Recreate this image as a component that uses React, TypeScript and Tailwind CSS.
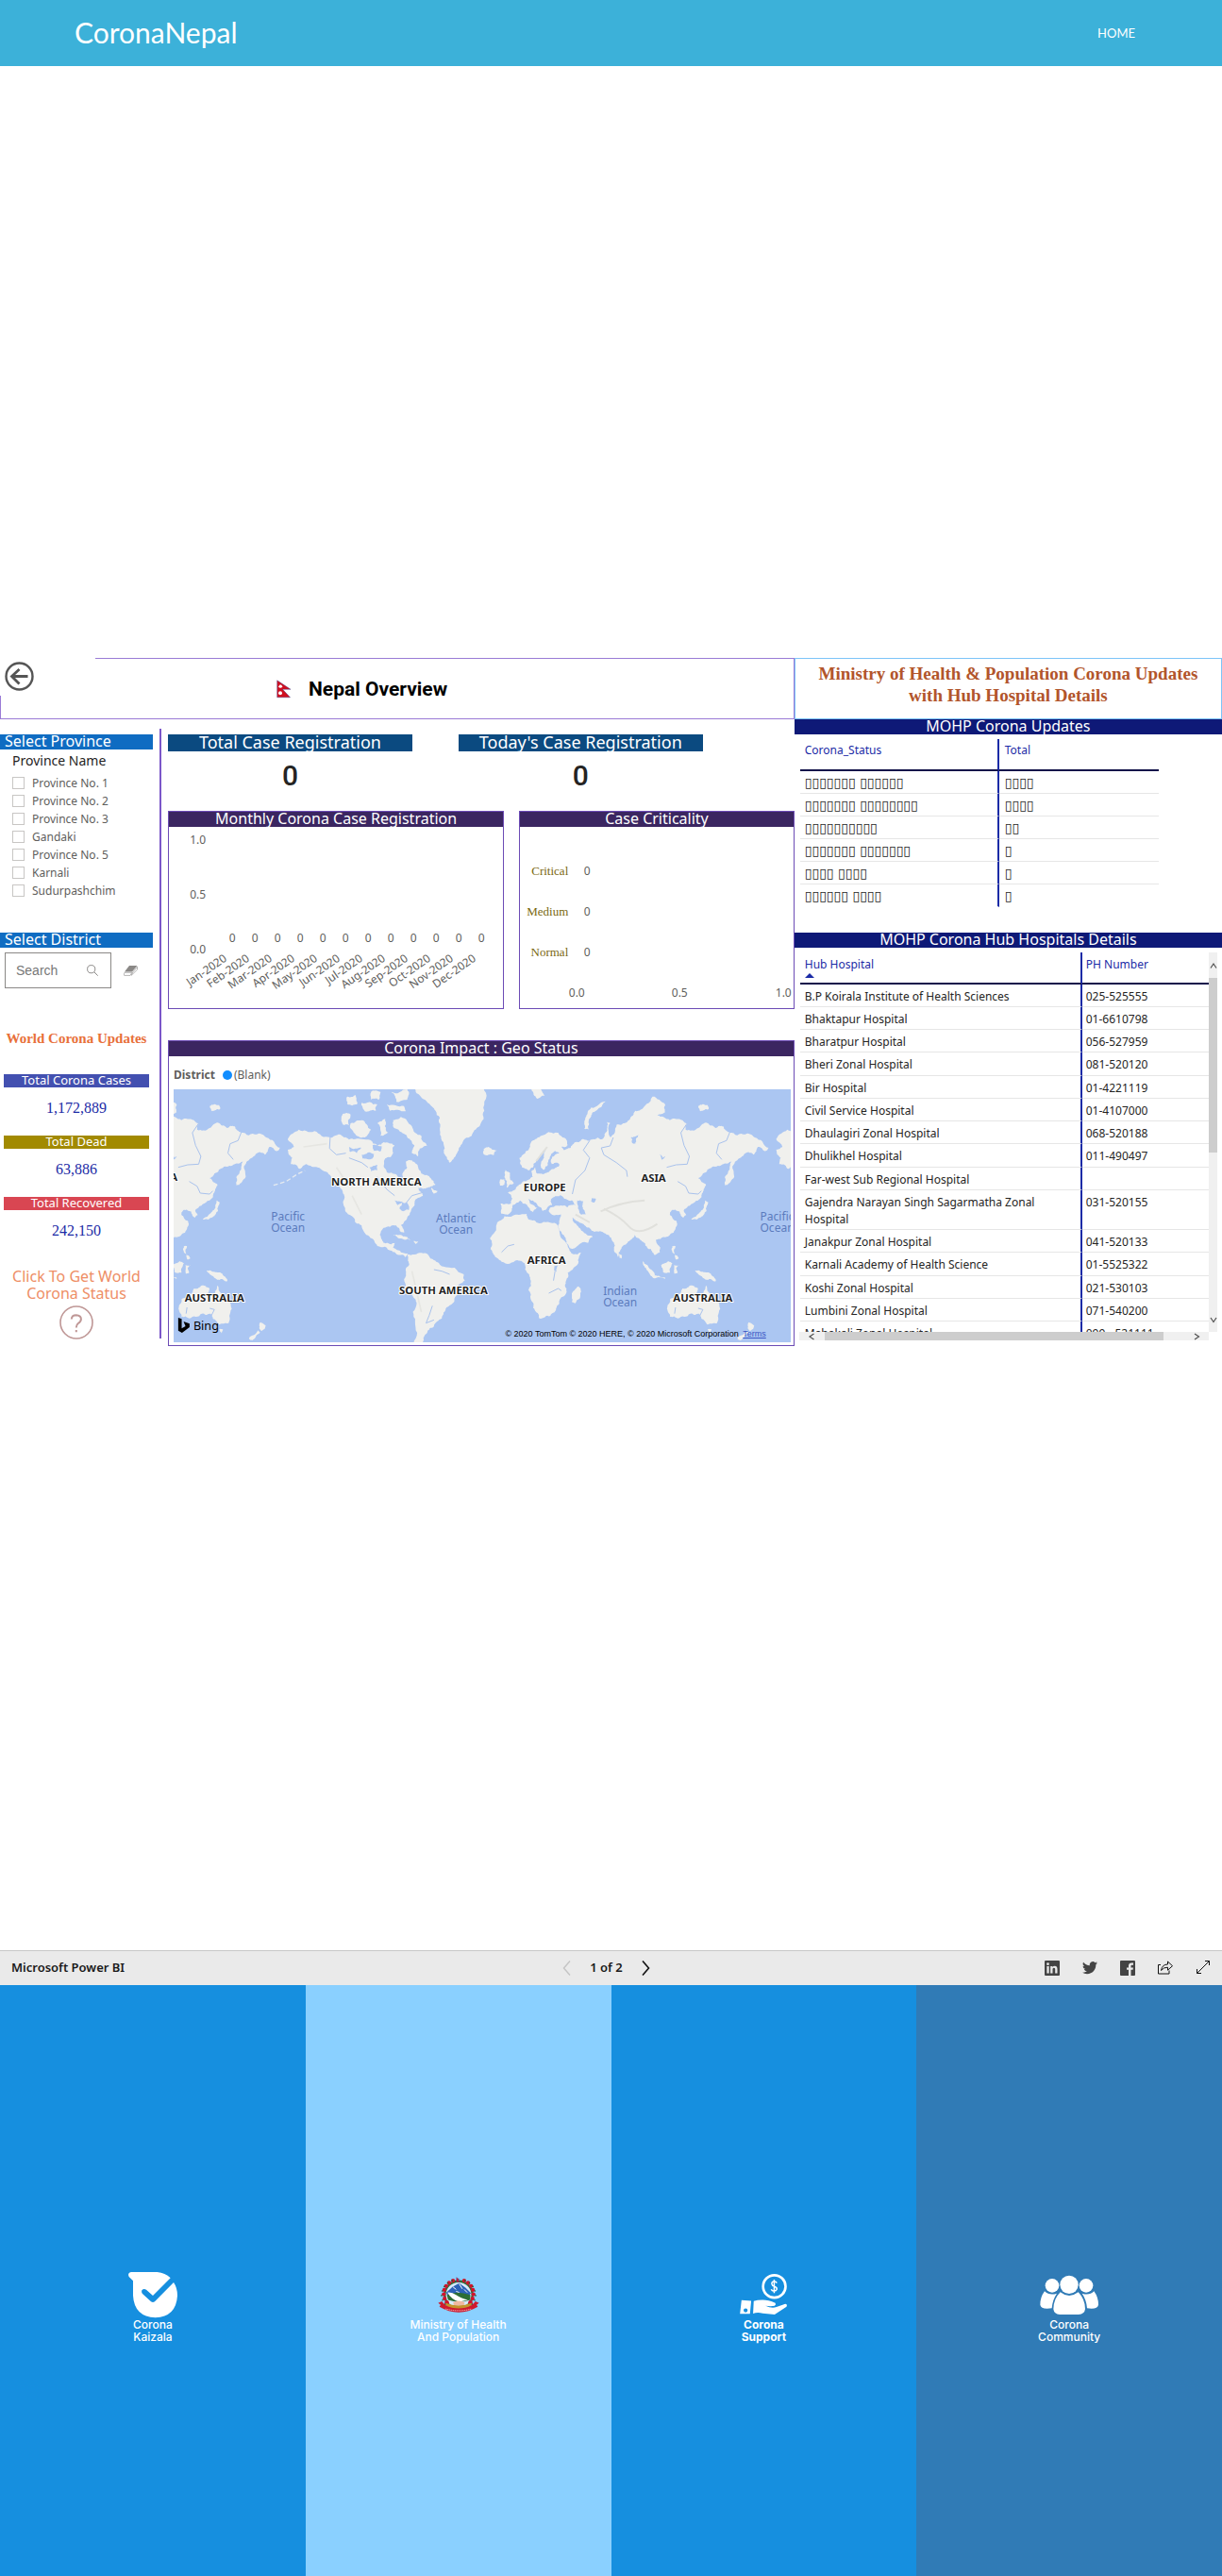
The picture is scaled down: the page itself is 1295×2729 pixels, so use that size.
import React from "react";

type Point = [number, number];

const NOTO = "font-['Noto_Sans','Open_Sans',sans-serif]";
const SERIF = "font-['Liberation_Serif',serif]";

/* ---------- Map geometry ---------- */

function roughen(points: Point[], seed: number): string {
  let state = seed * 7919 + 13;
  const random = () => {
    state = (state * 1103515245 + 12345) % 2147483648;
    return state / 2147483648 - 0.5;
  };
  let current = points;
  for (let pass = 0; pass < 3; pass++) {
    const next: Point[] = [];
    current.forEach((a, i) => {
      const b = current[(i + 1) % current.length];
      const k = random() * 0.34;
      next.push(a, [
        (a[0] + b[0]) / 2 - (b[1] - a[1]) * k,
        (a[1] + b[1]) / 2 + (b[0] - a[0]) * k,
      ]);
    });
    current = next;
  }
  return "M" + current.map((p) => `${p[0].toFixed(1)} ${p[1].toFixed(1)}`).join("L") + "Z";
}

function parse(text: string): Point[] {
  return text.split(" ").map((pair) => pair.split(",").map(Number) as Point);
}

const EAST = [
  "62,555 95,555 100,540 85,520 110,510 120,495 150,480 165,470 160,452 172,440 178,460 195,462 215,455 235,442 250,432 240,425 225,430 222,415 235,400 248,395 235,388 222,398 215,415 212,432 200,448 190,438 192,420 200,400 205,385 188,400 175,420 165,440 150,450 130,440 122,410 140,395 155,370 180,345 215,328 245,330 270,350 275,370 255,375 262,385 285,378 300,360 325,350 350,352 370,345 385,350 395,330 400,295 410,300 412,345 425,330 430,305 455,300 470,290 490,260 520,245 545,215 585,240 585,265 560,275 600,290 640,290 655,300 650,320 690,315 715,298 745,315 770,310 790,330 840,335 870,345 915,378 900,388 880,375 865,400 840,395 810,420 800,435 803,455 790,490 775,497 775,470 790,440 797,422 770,430 735,438 705,460 690,475 715,495 705,520 690,545 665,560 645,575 652,592 642,600 630,580 610,575 600,590 620,610 618,635 600,655 570,668 555,670 570,695 568,710 550,718 540,700 528,695 520,680 505,670 488,655 465,680 445,700 435,725 425,710 415,670 405,655 395,650 360,645 335,630 325,620 300,608 290,600 305,625 325,645 355,660 340,680 300,695 285,698 265,660 245,630 250,605 255,590 225,590 215,580 220,568 245,562 275,567 300,560 290,545 265,540 255,530 235,532 222,545 225,560 205,575 195,578 180,562 165,545 150,540 155,555 180,570 165,582 145,558 125,545 110,555 100,560 98,575 85,590 65,588",
  "75,595 105,592 145,588 150,605 185,618 240,620 250,650 280,700 290,715 318,712 310,740 275,775 270,800 272,835 250,860 240,885 220,912 185,920 175,900 165,870 150,830 158,800 140,765 138,745 115,735 65,740 45,725 30,700 28,665 50,620",
  "310,818 318,835 300,872 288,868 290,838",
  "78,448 92,460 92,478 104,490 82,505 82,485 74,470",
  "62,478 74,478 74,495 60,498",
  "8,382 25,376 38,385 28,398 10,400",
  "328,318 334,278 350,250 395,230 385,242 355,265 342,290 341,320",
  "712,545 722,552 716,580 700,598 668,606 690,588 704,575",
  "514,738 530,752 556,792 545,790 528,768",
  "545,788 585,790 585,795 550,793",
  "572,752 595,738 608,745 600,775 578,772",
  "612,750 630,752 620,760 625,775 614,778",
  "680,768 700,772 730,778 746,802 730,795 712,796 690,780",
  "608,690 618,690 615,715 628,730 618,732 608,710",
  "440,715 448,720 446,730 440,728",
  "600,860 625,845 640,825 670,815 690,825 685,840 705,850 715,815 735,850 755,870 760,890 750,935 720,940 700,920 690,905 665,905 625,920 600,915 592,885",
  "720,955 732,955 728,968",
  "852,932 868,942 856,960 848,952",
  "845,958 850,965 825,990 815,985",
  "690,245 720,242 722,256 698,262",
  "160,192 190,192 202,212 178,222",
];

const WEST = [
  "405,350 440,320 490,325 540,345 570,335 600,352 640,350 690,370 710,360 745,370 740,395 715,412 710,435 720,455 750,462 765,485 776,478 772,455 785,440 782,420 800,418 815,430 830,460 860,475 875,495 850,505 820,505 835,530 810,545 800,570 785,600 765,625 775,648 765,645 750,625 710,632 698,655 710,680 735,685 745,680 740,695 765,710 790,715 780,725 755,718 735,705 690,690 665,660 640,625 620,615 600,590 585,565 585,530 570,500 540,465 500,440 465,430 445,445 415,430 420,410 405,385 425,375",
  "785,718 830,712 870,735 900,755 965,780 968,800 945,830 935,865 910,885 895,920 870,945 850,960 840,975 830,1000 805,1000 810,930 815,870 800,840 775,795 780,765 790,740",
];

const WEST_FIXED = [
  "810,185 1028,185 1030,260 1015,310 990,340 955,370 940,400 920,425 905,400 900,360 890,310 875,260 850,235 815,205",
  "1026,388 1042,376 1070,386 1060,402 1038,402",
  "740,290 765,280 800,310 830,340 848,372 825,380 820,405 800,395 808,370 785,345 760,325 740,310",
  "580,270 605,272 600,305 582,305",
  "605,300 640,290 670,320 650,345 615,330",
  "690,300 715,285 725,330 700,340",
  "595,215 620,210 625,240 595,240",
  "640,235 690,240 685,260 650,262",
  "720,240 775,245 780,262 730,260",
  "735,200 785,192 785,225 750,232",
  "670,200 700,200 695,225 670,225",
  "740,655 770,658 795,670 775,670",
  "805,674 822,676 812,684",
  "862,505 882,515 870,524",
];

const EAST_D = EAST.map((s, i) => roughen(parse(s), i + 3));
const WEST_D = WEST.map((s, i) => roughen(parse(s), i + 40));
const WEST_FIXED_D = WEST_FIXED.map((s, i) => roughen(parse(s), i + 60));

const LAKES_EAST = [
  "240,545 262,540 285,552 262,562 235,560",
  "305,545 325,548 322,565 332,590 318,590 308,570",
  "352,538 365,540 360,552 350,548",
  "475,345 500,335 490,365 480,362",
  "566,398 578,410 586,404 574,416",
  "232,755 244,752 240,772 232,768",
];
const LAKES_WEST = [
  "600,375 640,378 625,395 602,390",
  "640,400 680,398 675,412 642,412",
  "665,440 690,432 690,450 670,452",
  "745,545 772,548 755,560",
  "760,570 768,552 785,552 790,575 772,580",
  "675,370 705,374 700,390 680,388",
];
const LE_D = LAKES_EAST.map((s, i) => roughen(parse(s), i + 90));
const LW_D = LAKES_WEST.map((s, i) => roughen(parse(s), i + 110));

function EastLand() {
  return (
    <g>
      {EAST_D.map((d, i) => <path key={i} d={d} fill="#f0f0ed" />)}
      {LE_D.map((d, i) => <path key={i} d={d} fill="#abc6f2" />)}
      <g fill="none" stroke="#a9c2ec" strokeWidth="3">
        <path d="M655 300 635 330 645 370 662 405 655 430 620 432 590 440" />
        <path d="M420 345 410 372 382 378 390 400 430 425 462 450 465 470" />
        <path d="M790 330 780 355 755 365 748 395 765 415" />
        <path d="M345 355 325 385 345 410 330 450 300 480 290 525" />
        <path d="M625 485 650 500 660 522 690 525 700 515" />
        <path d="M65 710 85 690 105 685M215 840 245 825 255 832M235 770 230 800" />
        <path d="M615 905 618 885M690 888 705 892 695 912" />
      </g>
      <g fill="none" stroke="#e0e0dc" strokeWidth="6">
        <path d="M390 572Q440 595 470 628T560 620M380 580Q440 550 520 545M300 590 345 615M210 375 175 420" />
      </g>
    </g>
  );
}

function WestLand() {
  return (
    <g>
      {WEST_D.map((d, i) => <path key={i} d={d} fill="#f0f0ed" />)}
      {LW_D.map((d, i) => <path key={i} d={d} fill="#abc6f2" />)}
      <g fill="none" stroke="#a9c2ec" strokeWidth="3">
        <path d="M540 345 538 380 560 400 590 395M600 410 640 425 660 440M690 470 720 510 745 530M780 555 800 530 835 520" />
        <path d="M870 765 895 770 920 780M865 880 855 910 845 935 870 925" />
      </g>
      <path d="M455 375 530 365M560 440 600 500M610 530 640 590M800 770 830 900" stroke="#e6e6e2" strokeWidth="5" fill="none" />
    </g>
  );
}

function MapLabel({ x, y, children }: { x: number; y: number; children: string }) {
  return (
    <text x={x} y={y} textAnchor="middle" fontSize="34" fontWeight="700" fill="#1f1f1f" stroke="#ffffff" strokeWidth="6" strokeLinejoin="round" paintOrder="stroke">
      {children}
    </text>
  );
}

function OceanLabel({ x, y, name }: { x: number; y: number; name: string }) {
  return (
    <text textAnchor="middle" fontSize="36" fill="#5b7bbd">
      <tspan x={x} y={y}>{name}</tspan>
      <tspan x={x} y={y + 36}>Ocean</tspan>
    </text>
  );
}

function WorldMap() {
  return (
    <div className="relative">
      <svg viewBox="42 192 1962 804" className={`block h-[268px] w-full bg-[#abc6f2] ${NOTO}`} preserveAspectRatio="xMidYMid slice" role="img" aria-label="World map">
        <g transform="translate(-533 0)"><EastLand /></g>
        {WEST_FIXED_D.map((d, i) => <path key={i} d={d} fill="#f0f0ed" />)}
        <WestLand />
        <path d="M360 497 400 485 435 462 460 450" stroke="#e6ebf0" strokeWidth="4" fill="none" strokeDasharray="14 8" />
        <g transform="translate(1020 0)"><EastLand /></g>
        <g transform="translate(1553 0)"><WestLand /></g>
        <MapLabel x={15} y={484}>ASIA</MapLabel>
        <MapLabel x={687} y={497}>NORTH AMERICA</MapLabel>
        <MapLabel x={900} y={843}>SOUTH AMERICA</MapLabel>
        <MapLabel x={172} y={867}>AUSTRALIA</MapLabel>
        <MapLabel x={1222} y={515}>EUROPE</MapLabel>
        <MapLabel x={1568} y={485}>ASIA</MapLabel>
        <MapLabel x={1228} y={746}>AFRICA</MapLabel>
        <MapLabel x={1725} y={867}>AUSTRALIA</MapLabel>
        <OceanLabel x={406} y={610} name="Pacific" />
        <OceanLabel x={940} y={616} name="Atlantic" />
        <OceanLabel x={1462} y={847} name="Indian" />
        <OceanLabel x={1961} y={610} name="Pacific" />
        <path d="M57 918 68 922 68 952 80 945 74 930 93 937 93 948 69 966 57 959Z" fill="#000" />
        <text x="105" y="957" fontSize="38" fill="#000">Bing</text>
      </svg>
      <p className="absolute right-[26px] bottom-[3px] font-['Liberation_Sans',sans-serif] text-[9px] leading-3 text-black">
        © 2020 TomTom © 2020 HERE, © 2020 Microsoft Corporation{" "}
        <a href="#terms" className="ml-[2px] text-[#3a55c4] underline">Terms</a>
      </p>
    </div>
  );
}

/* ---------- Sidebar ---------- */

const PROVINCES = ["Province No. 1", "Province No. 2", "Province No. 3", "Gandaki", "Province No. 5", "Karnali", "Sudurpashchim"];

function WorldStat({ label, value, tone }: { label: string; value: string; tone: string }) {
  return (
    <div className="ml-1 w-[154px] text-center">
      <h3 className={`h-[14px] text-[13px] leading-[13px] text-white ${tone}`}>{label}</h3>
      <p className={`pt-3 pb-[19px] text-base leading-5 text-[#1b2ba6] ${SERIF}`}>{value}</p>
    </div>
  );
}

function Sidebar() {
  return (
    <aside className="pt-[6px]">
      <h2 className="mr-[7px] h-4 bg-[#0f6cc2] pl-[5px] text-base leading-[15px] text-white">Select Province</h2>
      <fieldset className="pb-[35px]">
        <legend className="h-[26px] pl-[13px] text-sm leading-6 text-[#252423]">Province Name</legend>
        {PROVINCES.map((name) => (
          <label key={name} className="flex h-[19px] items-center gap-2 pl-[13px] text-xs text-[#605e5c]">
            <input type="checkbox" className="size-[13px] appearance-none border border-[#c8c6c4] bg-white checked:bg-[#605e5c]" />
            {name}
          </label>
        ))}
      </fieldset>
      <h2 className="mr-[7px] h-4 bg-[#0f6cc2] pl-[5px] text-base leading-[15px] text-white">Select District</h2>
      <div className="mt-[5px] flex items-center">
        <label className="ml-[5px] flex h-[38px] w-[113px] items-center border border-[#8a8886] pr-[13px] pl-[11px]">
          <input type="search" aria-label="Search district" placeholder="Search" className="w-full min-w-0 bg-transparent font-['Liberation_Sans',sans-serif] text-sm outline-none placeholder:text-[#777]" />
          <svg viewBox="0 0 12 12" className="size-3 shrink-0" fill="none" stroke="#8a8886">
            <circle cx="4.7" cy="4.7" r="4.1" />
            <path d="m7.7 7.7 4 4" />
          </svg>
        </label>
        <button type="button" aria-label="Clear selection" className="ml-[13px]">
          <svg viewBox="0 0 15 11" className="h-[11px] w-[15px]">
            <path d="M6 0h8.500L9 6.500H1z" fill="#8a8886" />
            <path d="M1 7.300H8.800L7 10.400H.700Q-.3 9 1 7.300ZM9.700 7 14.500 1.200V4.200L8.200 10.300Z" fill="none" stroke="#9a9896" strokeWidth=".7" />
          </svg>
        </button>
      </div>
      <h2 className={`mt-[43px] mr-[7px] mb-7 text-center text-[15px] leading-5 font-bold text-[#e8703a] ${SERIF}`}>World Corona Updates</h2>
      <WorldStat label="Total Corona Cases" value="1,172,889" tone="bg-[#4350b0]" />
      <WorldStat label="Total Dead" value="63,886" tone="bg-[#a28a00]" />
      <WorldStat label="Total Recovered" value="242,150" tone="bg-[#d94652]" />
      <a href="#world" className="mt-[10px] mr-[7px] block text-center text-base leading-[18px] text-[#ee8e66]">
        Click To Get World
        <br />
        Corona Status
        <svg viewBox="0 0 36 36" className="mx-auto mt-1 block size-9" fill="none" stroke="#bf9796" strokeWidth="1.6">
          <circle cx="18" cy="18" r="17" />
          <path d="M12.800 14.500Q13 10.300 17.800 10.300 22.900 10.500 22.900 14.500 22.900 17 19.800 19 17.800 20.500 17.800 23.500M17.800 26v2.200" strokeWidth="2" />
        </svg>
      </a>
    </aside>
  );
}

/* ---------- Charts ---------- */

const MONTHS = ["Jan", "Feb", "Mar", "Apr", "May", "Jun", "Jul", "Aug", "Sep", "Oct", "Nov", "Dec"];

function Panel({ title, children }: { title: string; children: React.ReactNode }) {
  return (
    <section className="border border-[#6c4bb5]">
      <h2 className="h-4 bg-[#3b2661] text-center text-base leading-[15px] text-white">{title}</h2>
      {children}
    </section>
  );
}

function MonthlyChart() {
  return (
    <svg viewBox="0 0 354 192" className="h-48 w-full text-xs" fill="#605e5c" role="img" aria-label="Monthly registrations">
      <text x="22" y="18">1.0</text>
      <text x="22" y="76">0.5</text>
      <text x="22" y="134">0.0</text>
      {MONTHS.map((month, i) => (
        <g key={month}>
          <text x={67 + i * 24} y="122" textAnchor="middle">0</text>
          <text transform={`translate(${62 + i * 24} 141) rotate(-35)`} textAnchor="end" className="text-xs">{month}-2020</text>
        </g>
      ))}
    </svg>
  );
}

const LEVELS = ["Critical", "Medium", "Normal"];

function CriticalityChart() {
  return (
    <svg viewBox="0 0 289 192" className="h-48 w-full text-xs" fill="#605e5c" role="img" aria-label="Case criticality">
      {LEVELS.map((level, i) => (
        <g key={level}>
          <text x="51" y={51 + i * 43} textAnchor="end" fill="#7a6710" className={`text-[13px] ${SERIF}`}>{level}</text>
          <text x="71" y={51 + i * 43} textAnchor="middle">0</text>
        </g>
      ))}
      <text x="60" y="180" textAnchor="middle">0.0</text>
      <text x="169" y="180" textAnchor="middle">0.5</text>
      <text x="279" y="180" textAnchor="middle">1.0</text>
    </svg>
  );
}

function BigNumber({ title, value }: { title: string; value: string }) {
  return (
    <div className="w-[39%] text-center">
      <h2 className="h-[18px] bg-[#0b4a80] text-lg leading-[17px] text-white">{title}</h2>
      <p className="pt-[10px] font-['Roboto',sans-serif] text-3xl leading-8 font-medium text-[#252423]">{value}</p>
    </div>
  );
}

function NepalFlag() {
  return (
    <svg viewBox="0 0 16 20" className="h-5 w-4">
      <path d="M.700.800 15 10.300H6.500L14.500 18.800H.700Z" fill="#d01020" stroke="#2b3a8c" strokeWidth=".4" />
      <path d="M2 7.500Q4 10 6.500 7.500L5 5.500H3.500Z" fill="#fff" />
      <circle cx="4" cy="14.300" r="2" fill="#fff" />
    </svg>
  );
}

/* ---------- Tables ---------- */

const STATUS: [string, string][] = [
  ["▯▯▯▯▯▯▯ ▯▯▯▯▯▯", "▯▯▯▯"],
  ["▯▯▯▯▯▯▯ ▯▯▯▯▯▯▯▯", "▯▯▯▯"],
  ["▯▯▯▯▯▯▯▯▯▯", "▯▯"],
  ["▯▯▯▯▯▯▯ ▯▯▯▯▯▯▯", "▯"],
  ["▯▯▯▯ ▯▯▯▯", "▯"],
  ["▯▯▯▯▯▯ ▯▯▯▯", "▯"],
];

const HOSPITALS: [string, string][] = [
  ["B.P Koirala Institute of Health Sciences", "025-525555"],
  ["Bhaktapur Hospital", "01-6610798"],
  ["Bharatpur Hospital", "056-527959"],
  ["Bheri Zonal Hospital", "081-520120"],
  ["Bir Hospital", "01-4221119"],
  ["Civil Service Hospital", "01-4107000"],
  ["Dhaulagiri Zonal Hospital", "068-520188"],
  ["Dhulikhel Hospital", "011-490497"],
  ["Far-west Sub Regional Hospital", ""],
  ["Gajendra Narayan Singh Sagarmatha Zonal Hospital", "031-520155"],
  ["Janakpur Zonal Hospital", "041-520133"],
  ["Karnali Academy of Health Science", "01-5525322"],
  ["Koshi Zonal Hospital", "021-530103"],
  ["Lumbini Zonal Hospital", "071-540200"],
  ["Mahakali Zonal Hospital", "099 - 521111"],
];

function BlueBar({ children }: { children: string }) {
  return <h2 className="h-4 bg-[#0e1977] text-center text-base leading-[15px] text-white">{children}</h2>;
}

function Chevron({ d }: { d: string }) {
  return (
    <svg viewBox="0 0 8 8" className="size-2" fill="none" stroke="#505050" strokeWidth="1.2">
      <path d={d} />
    </svg>
  );
}

function Hospitals() {
  return (
    <div className="mt-[5px] ml-[5px] grid grid-cols-[1fr_9px] grid-rows-[402px_9px] pr-[5px]">
      <div className="overflow-hidden pl-px">
        <table className="w-full table-fixed border-separate border-spacing-0 text-left text-xs leading-[18px] text-[#252423]">
          <thead className="text-[#1b2ba6]">
            <tr>
              <th className="h-[34px] w-[299px] border-r-2 border-b-2 border-r-[#1b2ba6] border-b-[#12124a] pt-1 pl-[5px] align-top font-normal" aria-sort="ascending">
                <span className="block leading-[18px]">Hub Hospital</span>
                <svg viewBox="0 0 10 5" className="h-[5px] w-[10px]"><path d="M0 5 5 0l5 5Z" fill="#1b2ba6" /></svg>
              </th>
              <th className="border-b-2 border-[#12124a] pt-1 pl-1 align-top font-normal">PH Number</th>
            </tr>
          </thead>
          <tbody>
            {HOSPITALS.map(([name, phone]) => (
              <tr key={name} className="align-top [&:nth-child(4n)]:h-[25px]">
                <td className="h-6 border-r-2 border-b border-r-[#1b2ba6] border-b-[#e6e6e6] pt-1 pr-4 pb-px pl-[5px]">{name}</td>
                <td className="border-b border-[#e6e6e6] pt-1 pb-px pl-1">{phone}</td>
              </tr>
            ))}
          </tbody>
        </table>
      </div>
      <div className="flex flex-col items-center bg-[#f0f0f0]">
        <button type="button" aria-label="Scroll up" className="flex h-[27px] items-center"><Chevron d="M1 6.500 4 2l3 4.500" /></button>
        <div className="h-[185px] w-full bg-[#cdcdcd]" />
        <button type="button" aria-label="Scroll down" className="mt-auto flex h-[27px] items-center"><Chevron d="M1 2 4 6.500 7 2" /></button>
      </div>
      <div className="flex items-center bg-[#f0f0f0]">
        <button type="button" aria-label="Scroll left" className="flex w-[27px] justify-center"><Chevron d="M6.500 1 2 4l4.500 3" /></button>
        <div className="h-full flex-1 bg-[#cdcdcd]" />
        <button type="button" aria-label="Scroll right" className="ml-[21px] flex w-[27px] justify-center"><Chevron d="M2 1 6.500 4 2 7" /></button>
      </div>
    </div>
  );
}

function MinistryColumn() {
  return (
    <div>
      <h1 className={`h-[65px] border border-[#7cc4f8] px-4 pt-1 text-center text-[19px] leading-[23px] font-bold text-[#b2552b] ${SERIF}`}>
        Ministry of Health &amp; Population Corona Updates with Hub Hospital Details
      </h1>
      <BlueBar>MOHP Corona Updates</BlueBar>
      <table className="mt-[5px] ml-[6px] w-[84%] table-fixed border-separate border-spacing-0 text-left text-xs text-[#252423]">
        <thead className="text-[#1b2ba6]">
          <tr>
            <th className="h-[34px] w-[211px] border-r-2 border-b-2 border-r-[#1b2ba6] border-b-[#12124a] pt-1 pl-[5px] align-top font-normal">Corona_Status</th>
            <th className="border-b-2 border-[#12124a] pt-1 pl-[6px] align-top font-normal">Total</th>
          </tr>
        </thead>
        <tbody className="font-['DejaVu_Sans',sans-serif] text-sm">
          {STATUS.map(([name, total]) => (
            <tr key={name} className="group">
              <td className="h-6 border-r-2 border-b border-r-[#1b2ba6] border-b-[#e6e6e6] pl-[5px] group-last:border-b-transparent">{name}</td>
              <td className="border-b border-[#e6e6e6] pl-[6px] group-last:border-b-transparent">{total}</td>
            </tr>
          ))}
        </tbody>
      </table>
      <div className="mt-[27px]">
        <BlueBar>MOHP Corona Hub Hospitals Details</BlueBar>
      </div>
      <Hospitals />
    </div>
  );
}

/* ---------- Report ---------- */

function Report() {
  return (
    <main className={`grid grid-cols-[65fr_35fr] items-start pt-[627px] pb-[640px] ${NOTO}`}>
      <div>
        <header className="relative flex h-[65px] items-center gap-[18px] border border-[#9a7bd6] pl-[292px]">
          <button type="button" aria-label="Back" className="absolute -top-px -left-px h-10 w-[101px] bg-white pl-[5px]">
            <svg viewBox="0 0 32 32" className="size-8" fill="none" stroke="#555" strokeWidth="2.400">
              <circle cx="15.500" cy="15.500" r="14" />
              <path d="M24.500 15.500H7.500M15.500 8 7.500 15.500l8 8" strokeWidth="2.800" />
            </svg>
          </button>
          <NepalFlag />
          <h1 className="font-['Roboto',sans-serif] text-[21px] leading-6 font-bold text-black">Nepal Overview</h1>
        </header>
        <div className="grid grid-cols-[169px_2px_1fr] pt-[10px]">
          <Sidebar />
          <div className="mb-[8px] bg-[#7b57c9]" />
          <div className="pt-[6px] pl-[7px]">
            <div className="flex gap-[49px]">
              <BigNumber title="Total Case Registration" value="0" />
              <BigNumber title="Today's Case Registration" value="0" />
            </div>
            <div className="mt-[21px] grid grid-cols-[55fr_45fr] gap-4">
              <Panel title="Monthly Corona Case Registration"><MonthlyChart /></Panel>
              <Panel title="Case Criticality"><CriticalityChart /></Panel>
            </div>
            <div className="mt-[33px]">
              <Panel title="Corona Impact : Geo Status">
                <div className="px-[3px] pb-[3px] pl-[5px]">
                  <div className="flex h-[35px] items-center pt-1 text-xs text-[#605e5c]">
                    <b>District</b>
                    <span className="ml-2 size-[10px] rounded-full bg-[#118dff]" />
                    <span className="ml-[2px]">(Blank)</span>
                  </div>
                  <WorldMap />
                </div>
              </Panel>
            </div>
          </div>
        </div>
      </div>
      <MinistryColumn />
    </main>
  );
}

/* ---------- Status bar ---------- */

function SocialIcons() {
  return (
    <div className="flex gap-6">
      <a href="#linkedin" aria-label="LinkedIn">
        <svg viewBox="0 0 16 16" className="size-4">
          <rect width="16" height="16" rx="1" fill="#444" />
          <path d="M2.400 6h2.300v7.500H2.400zM3.500 2.300a1.300 1.300 0 1 1 0 2.700 1.300 1.300 0 0 1 0-2.700M6.200 6h2.200v1c.5-.8 1.300-1.200 2.300-1.200 2.200 0 2.800 1.400 2.800 3.400v4.300h-2.300V9.700c0-1-.1-1.900-1.300-1.900s-1.400.9-1.400 1.900v3.800H6.200z" fill="#eaeaea" />
        </svg>
      </a>
      <a href="#twitter" aria-label="Twitter">
        <svg viewBox="0 0 24 24" className="size-4" fill="#444">
          <path d="M24 3.900a9.800 9.800 0 0 1-2.800.8A4.900 4.900 0 0 0 23.300 2a9.800 9.800 0 0 1-3.100 1.200 4.900 4.900 0 0 0-8.400 4.500A14 14 0 0 1 1.700 2.500a4.900 4.900 0 0 0 1.500 6.600A4.900 4.900 0 0 1 1 8.500a4.900 4.900 0 0 0 4 4.900 4.900 4.900 0 0 1-2.300.1 4.900 4.900 0 0 0 4.600 3.400A9.900 9.900 0 0 1 0 19a13.900 13.900 0 0 0 7.500 2.200c9.100 0 14.300-7.700 14-14.700A10 10 0 0 0 24 3.900" />
        </svg>
      </a>
      <a href="#facebook" aria-label="Facebook">
        <svg viewBox="0 0 16 16" className="size-4">
          <rect width="16" height="16" rx="1" fill="#444" />
          <path d="M9 16V9.800H7V7.400h2V5.600c0-2 1.200-3.200 3.100-3.200l1.900.1v2.200h-1.300c-1 0-1.200.5-1.200 1.200v1.500h2.400l-.3 2.400h-2.100V16z" fill="#eaeaea" />
        </svg>
      </a>
      <button type="button" aria-label="Share">
        <svg viewBox="0 0 16 16" className="size-4" fill="none" stroke="#111">
          <path d="M3 4.500H.500v9.500h11.500v-3.500" />
          <path d="M3.500 10.500Q4.500 4 10.500 4V1l5 4.700-5 4.500V7.200Q6 7 3.500 10.500Z" />
        </svg>
      </button>
      <button type="button" aria-label="Full screen">
        <svg viewBox="0 0 16 16" className="size-4" fill="none" stroke="#111">
          <path d="M1.500 13.500l13-13M10 .500h4.500V5M1.500 9v4.500H6" />
        </svg>
      </button>
    </div>
  );
}

function StatusBar() {
  return (
    <div className={`grid h-[37px] grid-cols-[1fr_auto_1fr] items-center border-t border-[#c8c8c8] bg-[#eaeaea] px-3 text-[13px] font-semibold text-[#1a1a1a] ${NOTO}`}>
      <span>Microsoft Power BI</span>
      <div className="flex items-center gap-5 pr-[10px]">
        <button type="button" aria-label="Previous page" disabled>
          <svg viewBox="0 0 9 16" className="h-4 w-[9px]" fill="none" stroke="#c4c4c4" strokeWidth="1.400"><path d="M8 .500 1.500 8 8 15.500" /></svg>
        </button>
        <span>1 of 2</span>
        <button type="button" aria-label="Next page">
          <svg viewBox="0 0 9 16" className="h-4 w-[9px]" fill="none" stroke="#111" strokeWidth="1.600"><path d="M1 .500 7.500 8 1 15.500" /></svg>
        </button>
      </div>
      <div className="flex justify-end"><SocialIcons /></div>
    </div>
  );
}

/* ---------- Tiles ---------- */

function KaizalaIcon() {
  return (
    <svg viewBox="105 77 162 150" className="h-[50px] w-[54px]" fill="#fff">
      <path d="M118 80H200Q225 82 242 99L186 155 165 136Q157 131 151 138 149 144 153 149L180 174Q186 178 192 174L252 113Q264 130 264 155 260 222 194 225 127 222 123 155V108L110 95Q104 82 118 80Z" />
    </svg>
  );
}

function EmblemIcon() {
  const blooms = Array.from({ length: 13 }, (_, i) => {
    const angle = ((-68 + i * 17.5) * Math.PI) / 180;
    return [Math.cos(angle), Math.sin(angle)] as Point;
  }).filter((p) => p[1] < 0.75);
  return (
    <svg viewBox="1089 88 138 122" className="h-[40px] w-[46px]">
      <circle cx="1158" cy="150" r="48" fill="#2f6f3a" />
      <circle cx="1158" cy="150" r="41" fill="#d8ebfb" />
      <path d="M1118 142 1138 124 1160 112 1180 126 1198 144 1192 152H1122Z" fill="#2c62b8" />
      <path d="M1140 124 1150 132M1160 114 1170 130M1176 132 1186 142M1150 138 1160 142" stroke="#fff" strokeWidth="3" />
      <path d="M1120 150Q1150 134 1196 150V166Q1160 178 1124 166Z" fill="#2c6e36" />
      <path d="M1122 142Q1136 140 1150 150T1188 166L1160 172Q1136 166 1122 142Z" fill="#fff" />
      <path d="M1140 174Q1158 164 1178 174L1174 184H1144Z" fill="#f0b8a0" />
      {blooms.map(([cos, sin], i) => (
        <g key={i} fill="#d3122c">
          <circle cx={1158 + cos * 48} cy={146 + sin * 46} r="6.500" />
          <circle cx={1158 - cos * 48} cy={146 + sin * 46} r="6.500" />
          <circle cx={1158 + cos * 55} cy={150 + sin * 50} r="2.500" fill="#245c2c" />
          <circle cx={1158 - cos * 55} cy={150 + sin * 50} r="2.500" fill="#245c2c" />
        </g>
      ))}
      <path d="M1116 176Q1158 192 1200 176L1196 194Q1158 204 1120 194Z" fill="#c4932c" />
      <path d="M1092 176 1104 170Q1114 186 1136 191 1158 196 1180 191 1202 186 1212 170L1224 176 1216 182 1220 188Q1190 206 1158 206T1096 188L1100 182Z" fill="#cf1a2e" />
      <path d="M1116 195Q1158 206 1200 195" stroke="#fff" strokeWidth="2" strokeDasharray="4 2" fill="none" />
      <path d="M1151 93 1161 100 1155 101 1163 108H1151Z" fill="#d3122c" stroke="#334a9a" />
    </svg>
  );
}

function SupportIcon() {
  return (
    <svg viewBox="102 82 156 136" className="h-[45px] w-[52px]" fill="#fff">
      <circle cx="215" cy="125" r="36" fill="none" stroke="#fff" strokeWidth="8" />
      <path d="M223 114Q220 108 214 109 206 110 207 117 208 123 215 125 224 128 223 134 221 140 214 140 207 140 205 134M214.500 103V146" fill="none" stroke="#fff" strokeWidth="4.500" />
      <path fillRule="evenodd" d="M110 169 141 171 137 213 105 213ZM123 195a6.500 6.500 0 1 0 .1 13 6.500 6.500 0 0 0-.1-13Z" />
      <path d="M149 172Q160 168 178 168 196 168 218 178 222 183 216 187 204 190 187 187 206 196 222 191L250 181Q258 182 254 190L216 215 178 211Q160 206 147 212Z" />
    </svg>
  );
}

function CommunityIcon() {
  return (
    <svg viewBox="1056 84 192 132" className="h-[44px] w-16" fill="#fff">
      <circle cx="1098" cy="121" r="22" />
      <circle cx="1206" cy="121" r="22" />
      <path d="M1074 139Q1060 158 1060 182 1062 194 1082 194L1097 193Q1099 166 1113 146 1090 154 1074 139ZM1231 139Q1245 158 1245 182 1243 194 1223 194L1209 193Q1207 166 1193 146 1216 154 1231 139Z" />
      <circle cx="1152" cy="118" r="29" />
      <path d="M1124 142Q1102 164 1102 196 1104 212 1122 213H1182Q1201 212 1203 196 1203 164 1181 142 1152 164 1124 142Z" />
    </svg>
  );
}

const TILES = [
  { lines: ["Corona", "Kaizala"], icon: <KaizalaIcon />, tone: "bg-[#168fdf] font-medium" },
  { lines: ["Ministry of Health", "And Population"], icon: <EmblemIcon />, tone: "bg-[#8ad0ff] font-medium" },
  { lines: ["Corona", "Support"], icon: <SupportIcon />, tone: "bg-[#168fdf] font-bold" },
  { lines: ["Corona", "Community"], icon: <CommunityIcon />, tone: "bg-[#307bb6] font-medium" },
];

export default function App() {
  return (
    <div className="min-w-[1180px] bg-white">
      <header className="flex h-[70px] items-center justify-between bg-[#3cb1d9] pr-[92px] pb-[2px] pl-[79px] font-['Lato',sans-serif] text-white">
        <a href="#top" className="text-[30px] leading-9">CoronaNepal</a>
        <nav><a href="#home" className="text-[13px]">HOME</a></nav>
      </header>
      <Report />
      <StatusBar />
      <nav className="grid grid-cols-4">
        {TILES.map(({ lines, icon, tone }) => (
          <a key={lines.join(" ")} href={`#${lines[1].toLowerCase()}`} className={`flex h-[626px] flex-col items-center pt-[302px] text-center font-['Inter',sans-serif] text-xs leading-[13px] text-white ${tone}`}>
            <span className="flex h-[51px] items-center">{icon}</span>
            <span>{lines[0]}<br />{lines[1]}</span>
          </a>
        ))}
      </nav>
    </div>
  );
}
